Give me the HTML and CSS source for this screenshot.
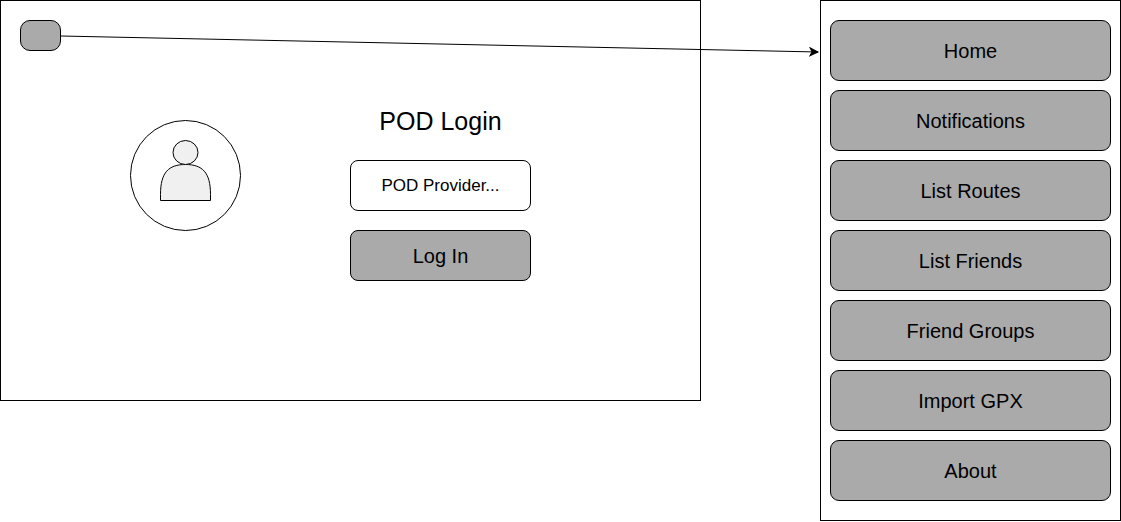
FILE: index.html
```html
<!DOCTYPE html>
<html lang="en">
<head>
<meta charset="utf-8">
<meta name="viewport" content="width=device-width, initial-scale=1">
<title>POD Login</title>
<link rel="stylesheet" href="styles.css">
</head>
<body>
<div class="board">
  <main class="screen">
    <button class="menu-toggle" type="button" aria-label="Menu"></button>
    <div class="login">
      <svg class="avatar" viewBox="0 0 111 111" aria-hidden="true">
        <circle cx="55.5" cy="55.5" r="55" fill="#fff" stroke="#000"/>
        <path d="M30.5 80.5V74.5C30.5 52.5 38.5 44.5 55.5 44.5S80.5 52.5 80.5 74.5V80.5Z" fill="#f0f0f0" stroke="#000"/>
        <ellipse cx="55.5" cy="32.5" rx="12.5" ry="12" fill="#f0f0f0" stroke="#000"/>
      </svg>
      <form class="login-form">
        <h1 class="title">POD Login</h1>
        <input class="field" type="text" placeholder="POD Provider..." aria-label="POD Provider">
        <button class="submit" type="button">Log In</button>
      </form>
    </div>
  </main>
  <nav class="menu" aria-label="Main menu">
    <button class="menu-item" type="button">Home</button>
    <button class="menu-item" type="button">Notifications</button>
    <button class="menu-item" type="button">List Routes</button>
    <button class="menu-item" type="button">List Friends</button>
    <button class="menu-item" type="button">Friend Groups</button>
    <button class="menu-item" type="button">Import GPX</button>
    <button class="menu-item" type="button">About</button>
  </nav>
  <svg class="connector" aria-hidden="true">
    <defs>
      <marker id="arrow" viewBox="0 0 10 10" refX="9" refY="5" markerWidth="10" markerHeight="10" markerUnits="userSpaceOnUse" orient="auto">
        <path d="M9 5L1 9L3 5L1 1Z" fill="#000" stroke="#000"/>
      </marker>
    </defs>
    <line x1="0" y1="6" x2="100%" y2="22" stroke="#000" marker-end="url(#arrow)"/>
  </svg>
</div>
</body>
</html>
```

FILE: styles.css
```css
* {
  box-sizing: border-box;
}

body {
  margin: 0;
  background: #fff;
  color: #000;
  font-family: "Liberation Sans", Arial, sans-serif;
}

button,
input {
  margin: 0;
  padding: 0;
  border: 1px solid #000;
  color: inherit;
  font-family: inherit;
}

button {
  padding-top: 2px;
  background: #aaa;
  font-size: 20px;
}

.board {
  position: relative;
  display: grid;
  grid-template-columns: minmax(0, 1fr) 301px;
  column-gap: 119px;
  align-items: start;
}

.screen {
  padding: 19px 19px 119px;
  border: 1px solid #000;
}

.menu-toggle {
  display: block;
  width: 41px;
  height: 31px;
  border-radius: 10px;
}

.login {
  display: flex;
  align-items: flex-start;
  gap: 109px;
  margin-top: 55px;
  padding-left: 110px;
}

.avatar {
  flex: none;
  width: 111px;
  height: 111px;
  margin-top: 14px;
}

.login-form {
  display: flex;
  flex-direction: column;
  gap: 19px;
  width: 181px;
}

.title {
  margin: 0 0 5px;
  font-size: 25px;
  font-weight: 400;
  line-height: 30px;
  text-align: center;
}

.field,
.submit {
  width: 100%;
  height: 51px;
  border-radius: 8px;
}

.field {
  background: #fff;
  font-size: 17px;
  text-align: center;
}

.field::placeholder {
  color: #000;
  opacity: 1;
}

.menu {
  display: flex;
  flex-direction: column;
  gap: 9px;
  padding: 19px 9px;
  border: 1px solid #000;
}

.menu-item {
  height: 61px;
  border-radius: 9px;
}

/* Arrow from the toggle button across to the menu it opens */
.connector {
  position: absolute;
  top: 30px;
  left: 61px;
  width: calc(100% - 364px);
  height: 30px;
  overflow: visible;
  pointer-events: none;
}
```
